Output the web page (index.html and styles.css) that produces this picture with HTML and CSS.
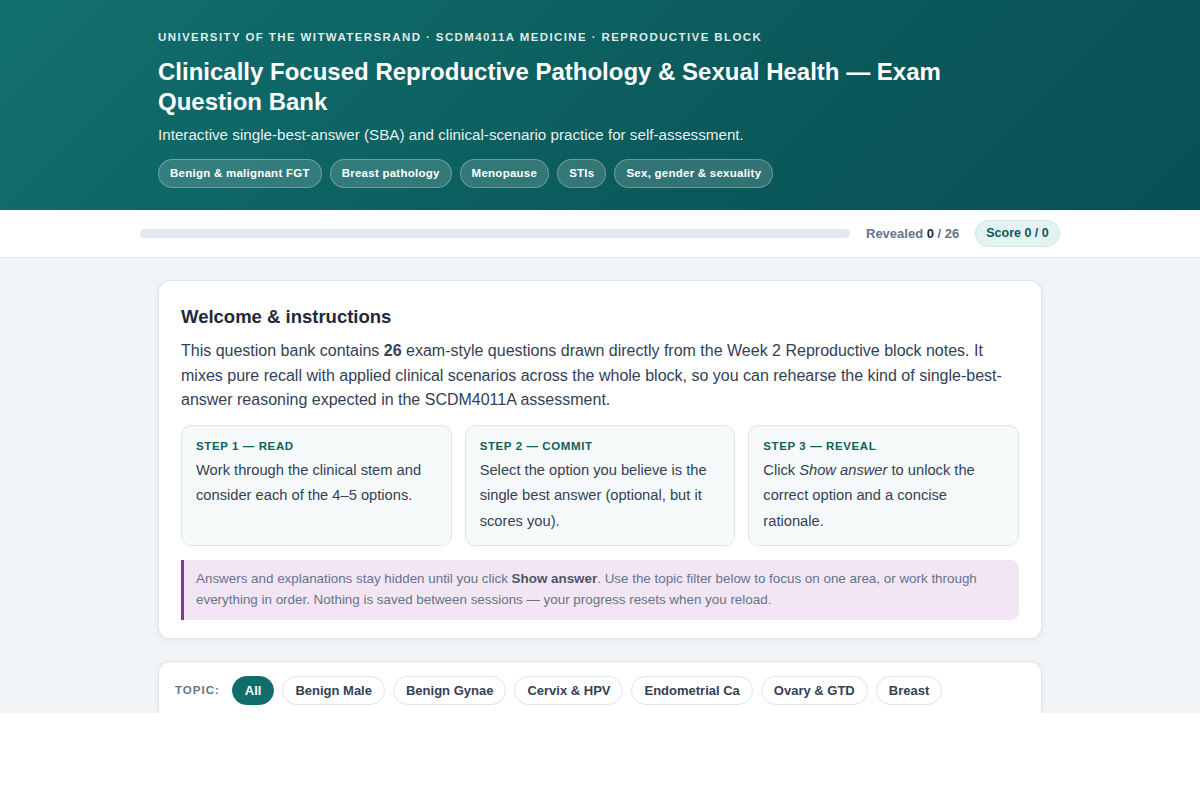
FILE: index.html
```html
<!DOCTYPE html>
<html lang="en">
<head>
	<meta charset="UTF-8">
	<title>Reproductive Pathology &amp; Sexual Health — Question Bank</title>
	<link rel="stylesheet" href="styles.css">
</head>
<body>
<header class="hero">
	<div class="wrap">
		<p class="eyebrow">University of the Witwatersrand · SCDM4011A Medicine · Reproductive Block</p>
		<h1>Clinically Focused Reproductive Pathology &amp; Sexual Health — Exam Question Bank</h1>
		<p class="lead">Interactive single-best-answer (SBA) and clinical-scenario practice for self-assessment.</p>
		<div class="tags">
			<span class="tag">Benign &amp; malignant FGT</span>
			<span class="tag">Breast pathology</span>
			<span class="tag">Menopause</span>
			<span class="tag">STIs</span>
			<span class="tag">Sex, gender &amp; sexuality</span>
		</div>
	</div>
</header>

<div class="progress">
	<div class="progress-inner">
		<div class="bar"><div class="bar-fill" style="width: 0%"></div></div>
		<span class="revealed">Revealed <b>0</b> / 26</span>
		<span class="score">Score 0 / 0</span>
	</div>
</div>

<main class="page">
	<section class="card">
		<h2>Welcome &amp; instructions</h2>
		<p class="intro">This question bank contains <b>26</b> exam-style questions drawn directly from the Week 2 Reproductive block notes. It mixes pure recall with applied clinical scenarios across the whole block, so you can rehearse the kind of single-best-answer reasoning expected in the SCDM4011A assessment.</p>

		<div class="steps">
			<div class="step">
				<h3>Step 1 — Read</h3>
				<p>Work through the clinical stem and consider each of the 4–5 options.</p>
			</div>
			<div class="step">
				<h3>Step 2 — Commit</h3>
				<p>Select the option you believe is the single best answer (optional, but it scores you).</p>
			</div>
			<div class="step">
				<h3>Step 3 — Reveal</h3>
				<p>Click <em>Show answer</em> to unlock the correct option and a concise rationale.</p>
			</div>
		</div>

		<p class="note">Answers and explanations stay hidden until you click <b>Show answer</b>. Use the topic filter below to focus on one area, or work through everything in order. Nothing is saved between sessions — your progress resets when you reload.</p>
	</section>

	<section class="card filter">
		<span class="filter-label">Topic:</span>
		<button type="button" class="chip active">All</button>
		<button type="button" class="chip">Benign Male</button>
		<button type="button" class="chip">Benign Gynae</button>
		<button type="button" class="chip">Cervix &amp; HPV</button>
		<button type="button" class="chip">Endometrial Ca</button>
		<button type="button" class="chip">Ovary &amp; GTD</button>
		<button type="button" class="chip">Breast</button>
	</section>
</main>
</body>
</html>
```

FILE: styles.css
```css
* {
	box-sizing: border-box;
}

body {
	margin: 0;
	font-family: "Liberation Sans", Arial, sans-serif;
	color: #1e293b;
	background: #fff;
}

.wrap {
	width: 884px;
	margin: 0 auto;
}

/* header */
.hero {
	height: 210px;
	padding-top: 31px;
	color: #fff;
	background: linear-gradient(135deg, #11706e 0%, #0b5a5b 60%, #085055 100%);
}

.eyebrow {
	margin: 0;
	font-size: 11.5px;
	font-weight: bold;
	text-transform: uppercase;
	letter-spacing: 1.4px;
	color: rgba(255, 255, 255, 0.88);
}

.hero h1 {
	margin: 14px 0 0;
	width: 800px;
	font-size: 24px;
	line-height: 30px;
}

.lead {
	margin: 7px 0 0;
	font-size: 15.2px;
	line-height: 22px;
	color: rgba(255, 255, 255, 0.92);
}

.tags {
	display: flex;
	gap: 8px;
	margin-top: 13px;
}

.tag {
	height: 29px;
	line-height: 27px;
	padding: 0 11px;
	font-size: 11.5px;
	font-weight: bold;
	letter-spacing: 0.25px;
	border-radius: 999px;
	background: rgba(255, 255, 255, 0.16);
	border: 1px solid rgba(255, 255, 255, 0.28);
}

/* progress strip */
.progress {
	background: #fff;
	border-bottom: 1px solid #e2e8f0;
	box-shadow: 0 1px 2px rgba(15, 23, 42, 0.05);
}

.progress-inner {
	width: 920px;
	margin: 0 auto;
	height: 47px;
	display: flex;
	align-items: center;
}

.bar {
	width: 710px;
	height: 9px;
	border-radius: 999px;
	background: #e2e8f0;
	overflow: hidden;
}

.bar-fill {
	height: 100%;
	background: #0f6e6b;
}

.revealed {
	margin-left: 16px;
	font-size: 13px;
	font-weight: bold;
	color: #64748b;
}

.revealed b {
	color: #1e293b;
}

.score {
	margin-left: 16px;
	height: 27px;
	line-height: 25px;
	padding: 0 10px;
	font-size: 12.5px;
	font-weight: bold;
	color: #0b5a57;
	background: #e3f3f1;
	border: 1px solid #cfe7e4;
	border-radius: 999px;
}

/* main area */
.page {
	background: #f1f5f8;
	height: 455px;
	overflow: hidden;
	padding-top: 22px;
}

.card {
	width: 884px;
	margin: 0 auto 22px;
	background: #fff;
	border: 1px solid #dde4eb;
	border-radius: 12px;
	box-shadow: 0 2px 6px rgba(15, 23, 42, 0.06);
	padding: 22px 22px 18px;
}

.card h2 {
	margin: 2px 0 0;
	font-size: 18.5px;
	line-height: 24px;
	color: #1e293b;
}

.intro {
	margin: 10px 0 0;
	font-size: 16px;
	line-height: 24.5px;
	color: #334155;
}

.steps {
	display: grid;
	grid-template-columns: repeat(3, 1fr);
	gap: 13px;
	margin-top: 12px;
}

.step {
	background: #f7fafb;
	border: 1px solid #dde5ea;
	border-radius: 10px;
	padding: 13px 14px 10px;
}

.step h3 {
	margin: 0;
	font-size: 11.5px;
	line-height: 14px;
	font-weight: bold;
	text-transform: uppercase;
	letter-spacing: 0.6px;
	color: #0f5f5a;
}

.step p {
	margin: 5px 0 0;
	font-size: 14.7px;
	line-height: 25.8px;
	color: #334155;
}

.note {
	margin: 14px 0 0;
	padding: 8px 12px 10px;
	font-size: 13.4px;
	line-height: 21px;
	color: #64748b;
	background: #f3e6f4;
	border-left: 3px solid #7b3f8c;
	border-radius: 0 8px 8px 0;
}

.note b {
	color: #4b5563;
}

/* topic filter */
.filter {
	display: flex;
	align-items: center;
	gap: 8px;
	padding: 14px 16px;
}

.filter-label {
	font-size: 11.5px;
	font-weight: bold;
	text-transform: uppercase;
	letter-spacing: 1px;
	color: #64748b;
	margin-right: 4px;
}

.chip {
	height: 29px;
	padding: 0 12px;
	font-family: inherit;
	font-size: 13px;
	font-weight: bold;
	color: #334155;
	background: #fff;
	border: 1px solid #dde3ea;
	border-radius: 999px;
}

.chip.active {
	color: #fff;
	background: #0f6e6b;
	border-color: #0f6e6b;
}
```
